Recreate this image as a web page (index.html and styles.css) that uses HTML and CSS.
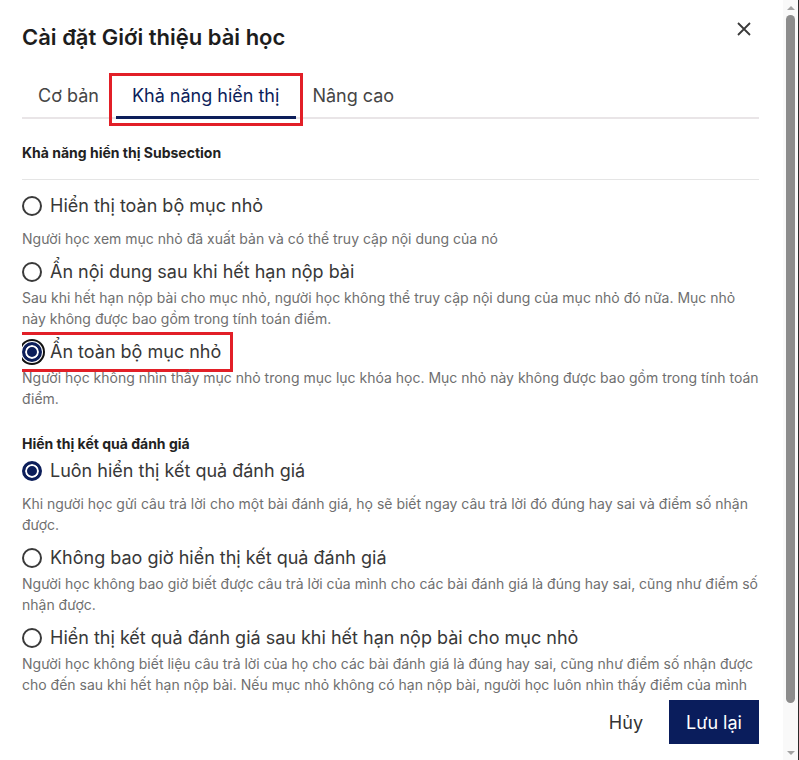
FILE: index.html
```html
<!DOCTYPE html>
<html lang="vi">
<head>
  <meta charset="UTF-8" />
  <meta name="viewport" content="width=device-width, initial-scale=1" />
  <title>Cài đặt Giới thiệu bài học</title>
  <link rel="stylesheet" href="styles.css">
</head>
<body>
  <div class="modal">
    <div class="modal-header">
      <h2 class="modal-title">Cài đặt Giới thiệu bài học</h2>
      <button class="close-btn" aria-label="Đóng">
        <svg width="14" height="14" viewBox="0 0 14 14"><path d="M1 1 L13 13 M13 1 L1 13" stroke="#3a3a3a" stroke-width="1.8" fill="none"/></svg>
      </button>
    </div>

    <div class="tabs">
      <div class="tab">Cơ bản</div>
      <div class="tab active marked">Khả năng hiển thị</div>
      <div class="tab">Nâng cao</div>
    </div>

    <div class="modal-body">
      <h3 class="group-title">Khả năng hiển thị Subsection</h3>
      <hr class="divider">

      <div class="option first">
        <label class="radio-row"><span class="radio"></span>Hiển thị toàn bộ mục nhỏ</label>
        <p class="desc">Người học xem mục nhỏ đã xuất bản và có thể truy cập nội dung của nó</p>
      </div>
      <div class="option">
        <label class="radio-row"><span class="radio"></span>Ẩn nội dung sau khi hết hạn nộp bài</label>
        <p class="desc">Sau khi hết hạn nộp bài cho mục nhỏ, người học không thể truy cập nội dung của mục nhỏ đó nữa. Mục nhỏ này không được bao gồm trong tính toán điểm.</p>
      </div>
      <div class="option">
        <div class="annot">
          <label class="radio-row"><span class="radio checked focused"></span>Ẩn toàn bộ mục nhỏ</label>
        </div>
        <p class="desc">Người học không nhìn thấy mục nhỏ trong mục lục khóa học. Mục nhỏ này không được bao gồm trong tính toán điểm.</p>
      </div>

      <h3 class="group-title second">Hiển thị kết quả đánh giá</h3>

      <div class="option first">
        <label class="radio-row"><span class="radio checked"></span>Luôn hiển thị kết quả đánh giá</label>
        <p class="desc">Khi người học gửi câu trả lời cho một bài đánh giá, họ sẽ biết ngay câu trả lời đó đúng hay sai và điểm số nhận được.</p>
      </div>
      <div class="option">
        <label class="radio-row"><span class="radio"></span>Không bao giờ hiển thị kết quả đánh giá</label>
        <p class="desc">Người học không bao giờ biết được câu trả lời của mình cho các bài đánh giá là đúng hay sai, cũng như điểm số nhận được.</p>
      </div>
      <div class="option">
        <label class="radio-row"><span class="radio"></span>Hiển thị kết quả đánh giá sau khi hết hạn nộp bài cho mục nhỏ</label>
        <p class="desc">Người học không biết liệu câu trả lời của họ cho các bài đánh giá là đúng hay sai, cũng như điểm số nhận được cho đến sau khi hết hạn nộp bài. Nếu mục nhỏ không có hạn nộp bài, người học luôn nhìn thấy điểm của mình</p>
      </div>
    </div>

    <div class="modal-footer">
      <button class="btn-cancel">Hủy</button>
      <button class="btn-save">Lưu lại</button>
    </div>
  </div>

  <div class="scrollbar">
    <div class="sb-arrow up"></div>
    <div class="sb-track"><div class="sb-thumb"></div></div>
    <div class="sb-arrow down"></div>
  </div>
  <div class="backdrop-edge"></div>
</body>
</html>
```

FILE: styles.css
```css
* {
  box-sizing: border-box;
}
body {
  margin: 0;
  height: 760px;
  overflow: hidden;
  display: flex;
  font-family: Inter, "Noto Sans", sans-serif;
  background: #fff;
  color: #333;
}
.modal {
  flex: 0 0 783px;
  height: 760px;
  display: flex;
  flex-direction: column;
  padding: 0 24px 0 22px;
  background: #fff;
}
.modal-header {
  display: flex;
  justify-content: space-between;
  align-items: flex-start;
  margin-top: 24px;
}
.modal-title {
  margin: 0;
  font-size: 22px;
  line-height: 26px;
  font-weight: 600;
  color: #1d1d1d;
}
.close-btn {
  border: none;
  background: none;
  padding: 0;
  margin: -2px 8px 0 0;
  width: 14px;
  height: 14px;
  cursor: pointer;
}
.tabs {
  display: flex;
  margin-top: 30px;
  box-shadow: inset 0 -2px 0 #e9e5e7;
}
.tab {
  position: relative;
  padding: 4px 17px 8px 16px;
  font-size: 18px;
  line-height: 24px;
  color: #454545;
  border-bottom: 3px solid transparent;
}
.tab.active {
  color: #0c1e5a;
  border-bottom-color: #0c1e5a;
}
/* red review markers */
.marked::after {
  content: "";
  position: absolute;
  top: -7px;
  bottom: -10px;
  left: -7px;
  right: -7px;
  border: 3px solid #e21f27;
  pointer-events: none;
}
.annot {
  display: flex;
  width: fit-content;
  border: 3px solid #e21f27;
  padding: 5px 9px 5px 11px;
  margin: -8px 0 -8px -14px;
}
.modal-body {
  height: 578px;
  overflow: hidden;
}
.group-title {
  margin: 25px 0 0;
  font-size: 14px;
  line-height: 18px;
  font-weight: 700;
  color: #222;
}
.group-title.second {
  margin-top: 25px;
  margin-bottom: 6px;
}
.divider {
  margin: 17px 0 14px;
  border: none;
  border-top: 1px solid #e5e5e5;
}
.option {
  margin-bottom: 10px;
}
.radio-row {
  display: flex;
  align-items: center;
  width: fit-content;
  gap: 8px;
  font-size: 18px;
  line-height: 24px;
  color: #383838;
}
.radio {
  width: 20px;
  height: 20px;
  border-radius: 50%;
  border: 2px solid #3a3a3a;
  background: #fff;
  flex: none;
}
.radio.checked {
  border: 3px solid #0c1e5a;
  box-shadow: inset 0 0 0 2px #fff;
  background: #0c1e5a;
}
.radio.focused {
  box-shadow: inset 0 0 0 2px #fff, 0 0 0 1px #fff, 0 0 0 3px #111;
}
.desc {
  margin: 3px 0 0;
  font-size: 14px;
  line-height: 21.5px;
  color: #6f6f6f;
}
.option.first .desc {
  margin-top: 10px;
}
.modal-footer {
  display: flex;
  justify-content: flex-end;
  align-items: center;
  gap: 10px;
  padding-top: 3px;
  background: #fff;
}
.btn-cancel {
  border: none;
  background: none;
  font-family: inherit;
  font-size: 18px;
  color: #333;
  padding: 10px 16px;
  cursor: pointer;
}
.btn-save {
  border: none;
  background: #0a1d5c;
  color: #fff;
  font-family: inherit;
  font-size: 18px;
  width: 90px;
  height: 44px;
  cursor: pointer;
}
.scrollbar {
  flex: 0 0 15px;
  height: 760px;
  display: flex;
  flex-direction: column;
  background: #f9f9f9;
}
.sb-arrow {
  height: 15px;
  display: flex;
  justify-content: center;
  align-items: center;
}
.sb-arrow.up::before,
.sb-arrow.down::before {
  content: "";
  border-left: 4px solid transparent;
  border-right: 4px solid transparent;
}
.sb-arrow.up::before {
  border-bottom: 4px solid #a3a3a3;
}
.sb-arrow.down::before {
  border-top: 4px solid #a3a3a3;
}
.sb-track {
  flex: 1;
  padding: 0 3px;
}
.sb-thumb {
  height: 688px;
  background: #8c8c8c;
  border-radius: 5px;
}
.backdrop-edge {
  flex: 0 0 1px;
  background: #2a2a2a;
}
```
